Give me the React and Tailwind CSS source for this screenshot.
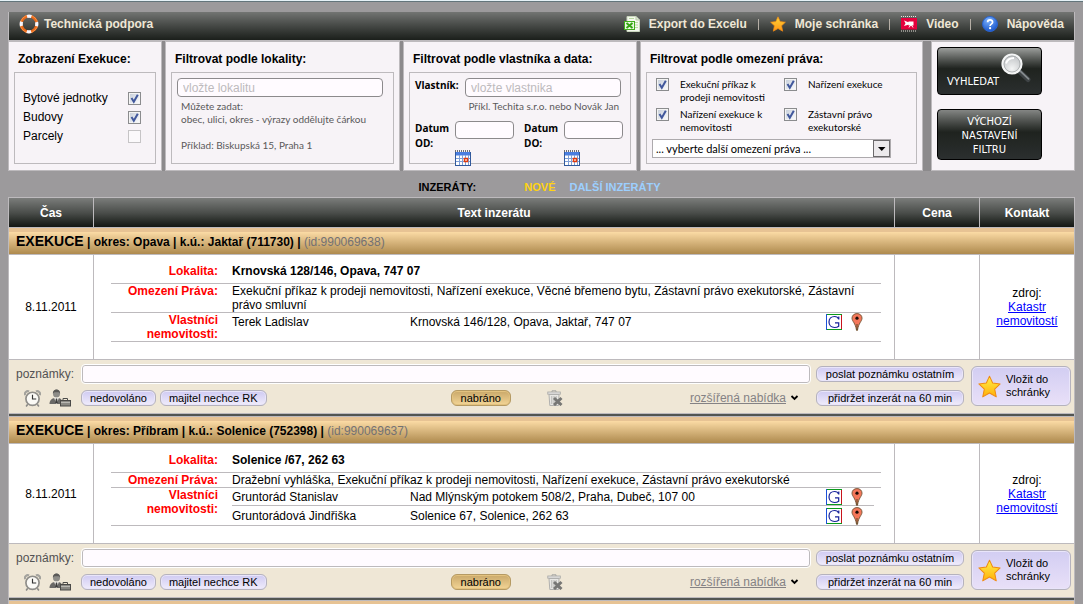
import React from "react";

const STAR_POINTS = "8,0.8 10.2,5.6 15.4,6.2 11.6,9.8 12.7,15.2 8,12.5 3.3,15.2 4.4,9.8 0.6,6.2 5.8,5.6";

function LifebuoyIcon() {
  return (
    <svg width="20" height="20" viewBox="0 0 20 20" aria-hidden="true">
      <circle cx="10" cy="10" r="7.8" fill="none" stroke="#e8681a" strokeWidth="2.800" />
      <circle cx="10" cy="10" r="8.6" fill="none" stroke="#ff9a4a" strokeWidth="0.8" />
      <circle
        cx="10"
        cy="10"
        r="7.8"
        fill="none"
        stroke="#f4f6ff"
        strokeWidth="3.2"
        strokeDasharray="4.4 7.85"
        strokeDashoffset="2.2"
      />
    </svg>
  );
}

function ExcelIcon() {
  return (
    <svg width="16" height="16" viewBox="0 0 16 16" aria-hidden="true">
      <path d="M3 0.5h9l3.5 3.5v11.5H3z" fill="#f4f8ee" stroke="#c9d6bd" />
      <path d="M12 0.5V4h3.5" fill="#dfe9d6" stroke="#b9c9aa" />
      <path d="M10 6.5h4M10 9h4M10 11.5h4M5 2.5h5" stroke="#b9dba0" />
      <rect x="0.5" y="5.5" width="10" height="8" fill="#e9f8e0" stroke="#3fae1c" />
      <path d="M2.500 7l6 5M8.500 7l-6 5" stroke="#35a512" strokeWidth="2" />
    </svg>
  );
}

function StarIcon({ size, light, dark }) {
  const id = `starFill${size}`;
  return (
    <svg width={size} height={size} viewBox="0 0 16 16" aria-hidden="true">
      <defs>
        <linearGradient id={id} x1="0" y1="0" x2="0" y2="1">
          <stop offset="0" stopColor={light} />
          <stop offset="1" stopColor={dark} />
        </linearGradient>
      </defs>
      <polygon points={STAR_POINTS} fill={`url(#${id})`} stroke="#f08a12" strokeWidth="0.7" strokeLinejoin="round" />
    </svg>
  );
}

function VideoIcon() {
  return (
    <svg width="16" height="16" viewBox="0 0 16 16" aria-hidden="true">
      <path d="M0 0.500h16M0 15h16" stroke="#e8e4dc" strokeDasharray="1 1" />
      <rect y="2" width="16" height="11.5" fill="#e4003c" />
      <path d="M7.500 5.500h5v4h-5zM3 4.500l5 2v2l-5 1.500 1.500-2.700z" fill="#fff" />
      <path d="M10 8.500l-2 3M10 8.500l2 3" fill="none" stroke="#fff" />
    </svg>
  );
}

function HelpIcon() {
  return (
    <svg width="16" height="16" viewBox="0 0 16 16" aria-hidden="true">
      <defs>
        <radialGradient id="helpFill" cx="0.4" cy="0.25" r="0.8">
          <stop offset="0" stopColor="#7db4ff" />
          <stop offset="1" stopColor="#1551c8" />
        </radialGradient>
      </defs>
      <circle cx="8" cy="8" r="7.500" fill="url(#helpFill)" stroke="#2a63cc" />
      <path d="M5.600 6.200c0-3.200 5-3.200 5 0 0 1.900-2.500 1.900-2.500 3.700" fill="none" stroke="#fff" strokeWidth="1.700" />
      <circle cx="8.100" cy="12.200" r="1.100" fill="#fff" />
    </svg>
  );
}

function CalendarIcon() {
  return (
    <svg width="16" height="16" viewBox="0 0 16 16" aria-hidden="true">
      <path d="M0 1h16" stroke="#444" strokeWidth="1.500" strokeDasharray="1 1" />
      <rect x="0.500" y="2.500" width="15" height="13" fill="#fff" stroke="#31599c" />
      <rect x="1" y="2" width="14" height="3.500" fill="#4a7ee0" />
      <path d="M1 8.500h14M1 11.500h14M4.500 5v10M7.500 5v10M10.500 5v10M13.500 5v10" stroke="#7f9ed6" />
      <rect x="9.500" y="8.500" width="3" height="3" fill="#fff" stroke="#e23a0c" strokeWidth="1.500" />
    </svg>
  );
}

function MagnifierIcon() {
  return (
    <svg width="32" height="32" viewBox="0 0 32 32" aria-hidden="true">
      <defs>
        <radialGradient id="lens" cx="0.5" cy="0.75" r="0.8">
          <stop offset="0" stopColor="#f4f5f5" />
          <stop offset="1" stopColor="#b9bcbf" />
        </radialGradient>
      </defs>
      <path d="M19.500 18.500l9.500 9" stroke="#3e4345" strokeWidth="5" strokeLinecap="round" />
      <path d="M20 17.800l9.500 9" stroke="#858b8e" strokeWidth="1.800" strokeLinecap="round" />
      <circle cx="13" cy="12" r="9.500" fill="url(#lens)" stroke="#f4f5f5" strokeWidth="2.200" />
      <circle cx="13" cy="12" r="8" fill="none" stroke="#a4a8aa" strokeWidth="0.800" />
      <path d="M7 11.500c1-3.500 4-5.500 8-5.500" fill="none" stroke="#fff" strokeWidth="2" />
    </svg>
  );
}

function GoogleIcon() {
  return (
    <svg width="16" height="16" viewBox="0 0 16 16" aria-hidden="true">
      <rect width="16" height="16" fill="#fff" />
      <path d="M0 0.500h16M0 15.500h16" stroke="#0a9a1c" />
      <path d="M0.500 0v16" stroke="#1c50d8" />
      <path d="M15.500 1v14" stroke="#c8141c" />
      <path d="M12.800 5.500V2.500M12.600 5c-.6-1.600-2.200-2.500-4-2.500C5.300 2.500 3 4.800 3 8s2.200 5.500 5.500 5.500c1.700 0 3.200-.5 4.200-1.300V8.800H9" fill="none" stroke="#16219a" strokeWidth="1.200" />
    </svg>
  );
}

function PinIcon() {
  return (
    <svg width="12" height="18" viewBox="0 0 12 18" aria-hidden="true">
      <path d="M6 0.600C3 0.600 1 2.600 1 5.200c0 3 3.600 5 4.500 12h1C7.400 10.200 11 8.200 11 5.200 11 2.600 9 0.600 6 0.600z" fill="#f5775a" stroke="#7a5a3c" />
      <path d="M6 11v6.500" stroke="#5b4a26" />
      <circle cx="6" cy="5.200" r="1.600" fill="#1c0a05" />
    </svg>
  );
}

function AlarmIcon() {
  return (
    <svg width="17" height="17" viewBox="0 0 16 16" aria-hidden="true">
      <path d="M1 4.800C.2 2.500 2.500.3 4.800 1.300M15 4.800c.8-2.300-1.500-4.500-3.800-3.500" fill="none" stroke="#a3a29d" strokeWidth="2" />
      <path d="M3.500 13.500L2 15.500M12.500 13.500l1.500 2" stroke="#8b8a87" strokeWidth="1.500" />
      <circle cx="8" cy="8.300" r="6.200" fill="#fbfaf6" stroke="#8f8e8a" strokeWidth="1.600" />
      <path d="M8 4.500v4h3.500" fill="none" stroke="#333" strokeWidth="1.100" />
    </svg>
  );
}

function AgentIcon() {
  return (
    <svg width="22" height="18" viewBox="0 0 22 18" aria-hidden="true">
      <path d="M4 5c-.5-6 7.500-6 7 0 0 5-7 5-7 0z" fill="#8d8c88" />
      <path d="M3.800 4.500c0-5.500 7.400-5.500 7.400 0L9.800 3.300H5.500z" fill="#5a5957" />
      <path d="M0.500 15c0-4 2.500-5.500 5-6h4c2.500.5 4 2 4 6z" fill="#6a6967" />
      <path d="M5 8.500h5L7.500 15z" fill="#f6f4ee" />
      <path d="M6.800 9.500h1.400l.6 4.500h-2.600z" fill="#3c3c3c" />
      <path d="M14 11.500V9.500h4.500v2" fill="none" stroke="#4c4c4a" />
      <rect x="11.500" y="11.500" width="10" height="5.500" fill="#8a8984" stroke="#4a4a48" />
      <path d="M12 13.500h9" stroke="#b9b8b3" />
    </svg>
  );
}

function TrashIcon() {
  return (
    <svg width="16" height="16" viewBox="0 0 16 16" aria-hidden="true">
      <path d="M5 2V0.800h4V2" fill="none" stroke="#a5a5a3" />
      <rect x="0.800" y="2" width="12.500" height="2.200" fill="#e4e3e1" stroke="#a5a5a3" strokeWidth="0.800" />
      <path d="M2 4.500h10l-.5 11H2.800z" fill="#e8e7e4" stroke="#b0b0ae" />
      <path d="M4.800 6v8M7 6v8M9.200 6v8" stroke="#b5b5b2" />
      <path d="M7 8l7.500 7M14.500 8L7 15" stroke="#777775" strokeWidth="3" />
    </svg>
  );
}

function Checkbox({ id, defaultChecked }) {
  return (
    <span className="grid size-[13px] shrink-0">
      <input
        id={id}
        type="checkbox"
        defaultChecked={defaultChecked}
        className="peer col-start-1 row-start-1 size-[13px] appearance-none border border-[#c6c4c6] bg-[#fbf9fb] checked:border-[#8b8c8e] checked:bg-linear-to-br checked:from-[#c4ccd8] checked:to-white checked:shadow-[inset_0_0_0_1px_#f4f4f4]"
      />
      <svg viewBox="0 0 13 13" className="pointer-events-none invisible col-start-1 row-start-1 size-[13px] peer-checked:visible" aria-hidden="true">
        <path d="M3.500 6l2.300 3.800L9.800 2.800" fill="none" stroke="#41589c" strokeWidth="2" />
      </svg>
    </span>
  );
}

function Panel({ title, children }) {
  return (
    <section className="flex flex-col border border-[#bdbabd] bg-[#f7f3f7] px-[5px] pb-1.5">
      <h2 className="px-1 pt-2.5 pb-1.5 text-xs leading-[14px] font-bold whitespace-nowrap">{title}</h2>
      <div className="flex-1 border border-[#bdbabd]">{children}</div>
    </section>
  );
}

const textInput = "min-w-0 rounded-[4px] border border-[#8c8a8c] bg-[#fffbff] px-[5px] text-xs placeholder:text-[#bdbabd]";
const helpText = "font-[Lato,sans-serif] text-[10px] leading-[13px]";

const shownTypes = [
  { id: "flats", label: "Bytové jednotky", on: true },
  { id: "buildings", label: "Budovy", on: true },
  { id: "parcels", label: "Parcely", on: false },
];

const restrictions = [
  { id: "r1", label: "Exekuční příkaz k prodeji nemovitosti" },
  { id: "r2", label: "Nařízení exekuce" },
  { id: "r3", label: "Nařízení exekuce k nemovitosti" },
  { id: "r4", label: "Zástavní právo exekutorské" },
];

function DateField({ id, label }) {
  return (
    <div className="grid grid-cols-[40px_1fr]">
      <label htmlFor={id} className="w-9 font-['Open_Sans',sans-serif] text-[10px] leading-[15px] font-bold">
        {label}
      </label>
      <div>
        <input id={id} type="text" className={`${textInput} block h-[18px] w-full`} />
        <button type="button" aria-label={`Kalendář ${label}`} className="mt-[11px] block">
          <CalendarIcon />
        </button>
      </div>
    </div>
  );
}

function Filters() {
  return (
    <form className="grid grid-cols-[154fr_235fr_234fr_283fr_149fr] gap-[3px] bg-[#8c8a8c]" onSubmit={(e) => e.preventDefault()}>
      <Panel title="Zobrazení Exekuce:">
        <div className="flex flex-col gap-[5px] pt-[18px] pr-3.5 pl-2">
          {shownTypes.map((t) => (
            <div key={t.id} className="flex items-center justify-between text-xs leading-[14px]">
              <label htmlFor={t.id}>{t.label}</label>
              <Checkbox id={t.id} defaultChecked={t.on} />
            </div>
          ))}
        </div>
      </Panel>

      <Panel title="Filtrovat podle lokality:">
        <div className="pt-[5px] pr-2.5 pl-[5px]">
          <input aria-label="Lokalita" placeholder="vložte lokalitu" className={`${textInput} block h-[19px] w-full`} />
          <p className={`${helpText} mt-[3px] pl-1 whitespace-nowrap text-[#5a595a]`}>
            Můžete zadat:
            <br />
            obec, ulici, okres - výrazy oddělujte čárkou
            <br />
            <br />
            Příklad: Biskupská 15, Praha 1
          </p>
        </div>
      </Panel>

      <Panel title="Filtrovat podle vlastníka a data:">
        <div className="h-[90px] pt-[5px] pr-[7px] pl-[5px]">
          <div className="grid grid-cols-[50px_1fr] pr-0.5">
            <label htmlFor="owner" className="font-['Open_Sans',sans-serif] text-[10px] leading-[15px] font-bold">
              Vlastník:
            </label>
            <input id="owner" type="text" placeholder="vložte vlastnika" className={`${textInput} h-[19px]`} />
          </div>
          <p className={`${helpText} mt-[3px] pr-1 text-right whitespace-nowrap text-[#5a595a]`}>
            Příkl. Techita s.r.o. nebo Novák Jan
          </p>
          <div className="mt-2 grid grid-cols-2 gap-x-2.5">
            <DateField id="from" label="Datum OD:" />
            <DateField id="to" label="Datum DO:" />
          </div>
        </div>
      </Panel>

      <Panel title="Filtrovat podle omezení práva:">
        <div className="pt-[5px] pl-[5px]">
          <div className="grid grid-cols-[128px_1fr] gap-y-1 pl-1">
            {restrictions.map((r) => (
              <div key={r.id} className="flex gap-[11px]">
                <Checkbox id={r.id} defaultChecked />
                <label htmlFor={r.id} className={`${helpText} max-w-[90px]`}>
                  {r.label}
                </label>
              </div>
            ))}
          </div>
          <div className="mt-[5px] mr-[25px] grid">
            <select
              aria-label="Další omezení práva"
              className="col-start-1 row-start-1 h-[19px] appearance-none border border-[#adaaad] bg-white px-[3px] font-[Lato,sans-serif] text-[11px] leading-[16px]"
            >
              <option>... vyberte další omezení práva ...</option>
            </select>
            <svg width="18" height="19" viewBox="0 0 18 19" className="pointer-events-none col-start-1 row-start-1 justify-self-end" aria-hidden="true">
              <rect x="0.500" y="1.500" width="16" height="16" fill="#ebe9eb" stroke="#6b696b" />
              <path d="M5 8h7.500L8.750 12z" fill="#000" />
            </svg>
          </div>
        </div>
      </Panel>

      <section className="ml-[5px] border border-[#bdbabd] bg-[#f7f3f7] px-[5px] pt-[5px] pb-[9px] font-['DejaVu_Sans',Verdana,sans-serif] text-[10px] leading-[14px] text-white">
        <button
          type="submit"
          className="flex h-[48px] w-[105px] items-end rounded-[4px] border border-black bg-linear-to-b from-[#9c9e9c] via-[#1f231f] via-45% to-[#2b2f2f] pb-[5px] pl-[9px]"
        >
          <span>VYHLEDAT</span>
          <span className="self-start pt-1">
            <MagnifierIcon />
          </span>
        </button>
        <button
          type="reset"
          className="mt-3.5 flex h-[51px] w-[105px] items-center justify-center rounded-[4px] border border-black bg-linear-to-b from-[#848684] via-[#1f231f] via-45% to-[#2b2f2f] px-3 pt-0.5 text-center"
        >
          VÝCHOZÍ NASTAVENÍ FILTRU
        </button>
      </section>
    </form>
  );
}

function TopBar() {
  const items = [
    { label: "Export do Excelu", icon: <ExcelIcon /> },
    { label: "Moje schránka", icon: <StarIcon size={16} light="#ffd83a" dark="#ff9414" /> },
    { label: "Video", icon: <VideoIcon /> },
    { label: "Nápověda", icon: <HelpIcon /> },
  ];
  return (
    <header className="flex h-[29px] items-center justify-between border-x border-b border-[#bdbabd] bg-linear-to-b from-[#737573] to-[#1b1f1b] px-2.5 pb-1 text-xs font-bold text-[#efe7d6]">
      <a href="#podpora" className="flex items-center gap-[5px]">
        <LifebuoyIcon />
        Technická podpora
      </a>
      <nav className="flex items-center">
        {items.map((it, i) => (
          <React.Fragment key={it.label}>
            {i > 0 && <span className="mx-[11px] h-[11px] w-px bg-[#b5aea5]" />}
            <a href="#menu" className="flex items-center gap-[9px]">
              {it.icon}
              {it.label}
            </a>
          </React.Fragment>
        ))}
      </nav>
    </header>
  );
}

const pill =
  "h-4 rounded-[6px] border border-[#b5b2bd] bg-linear-to-b from-[#cfcaf2] to-[#f0ecfb] pb-px text-[11px] leading-[12px] whitespace-nowrap shadow-[inset_0_0_0_1px_#e9e5fa]";
const goldPill =
  "h-4 rounded-[6px] border border-[#b59a63] bg-linear-to-b from-[#c9a86a] to-[#f3d596] px-[9px] pb-px text-[11px] leading-[12px] shadow-[inset_0_0_0_1px_#e3c27f]";

const listings = [
  {
    id: "990069638",
    place: "okres: Opava | k.ú.: Jaktař (711730)",
    date: "8.11.2011",
    locality: "Krnovská 128/146, Opava, 747 07",
    rights:
      "Exekuční příkaz k prodeji nemovitosti, Nařízení exekuce, Věcné břemeno bytu, Zástavní právo exekutorské, Zástavní právo smluvní",
    owners: [["Terek Ladislav", "Krnovská 146/128, Opava, Jaktař, 747 07"]],
  },
  {
    id: "990069637",
    place: "okres: Příbram | k.ú.: Solenice (752398)",
    date: "8.11.2011",
    locality: "Solenice /67, 262 63",
    rights: "Dražební vyhláška, Exekuční příkaz k prodeji nemovitosti, Nařízení exekuce, Zástavní právo exekutorské",
    owners: [
      ["Gruntorád Stanislav", "Nad Mlýnským potokem 508/2, Praha, Dubeč, 107 00"],
      ["Gruntorádová Jindřiška", "Solenice 67, Solenice, 262 63"],
    ],
  },
];

const cell = "border border-[#bdbabd] p-0";
const detailRow = "grid grid-cols-[107px_1fr] gap-x-3.5 border-b border-[#bdbabd]";
const detailLabel = "text-right font-bold text-[#ff0000]";

function NotesBar({ id }) {
  return (
    <div className="flex gap-[7px] bg-[#efe7d6] pt-[5px] pr-[3px] pb-1.5 pl-[7px]">
      <div className="flex flex-1 gap-1.5">
        <div className="flex-1">
          <div className="flex items-center">
            <label htmlFor={`note-${id}`} className="w-[66px] text-xs text-[#525152]">
              poznámky:
            </label>
            <input
              id={`note-${id}`}
              type="text"
              className="h-[18px] min-w-0 flex-1 rounded-[3px] border border-[#bdbabd] bg-[#fffbff] px-1 text-xs outline-1 outline-white"
            />
          </div>
          <div className="mt-1.5 flex h-[18px] items-center">
            <button type="button" aria-label="Připomenout" className="ml-2">
              <AlarmIcon />
            </button>
            <button type="button" aria-label="Makléř" className="ml-2">
              <AgentIcon />
            </button>
            <button type="button" className={`${pill} ml-2.5 px-2`}>
              nedovoláno
            </button>
            <button type="button" className={`${pill} ml-1 px-2`}>
              majitel nechce RK
            </button>
            <button type="button" className={`${goldPill} ml-[184px]`}>
              nabráno
            </button>
            <button type="button" aria-label="Smazat" className="ml-9">
              <TrashIcon />
            </button>
            <a href="#nabidka" className="ml-auto flex items-center gap-1 pr-[11px] text-xs leading-[14px] text-[#848284]">
              <span className="underline">rozšířená nabídka</span>
              <svg width="9" height="6" viewBox="0 0 9 6" aria-hidden="true">
                <path d="M1.500 1l3 3 3-3" fill="none" stroke="#000" strokeWidth="1.800" />
              </svg>
            </a>
          </div>
        </div>
        <div className="flex w-[148px] flex-col gap-2 pt-px">
          <button type="button" className={pill}>
            poslat poznámku ostatním
          </button>
          <button type="button" className={pill}>
            přidržet inzerát na 60 min
          </button>
        </div>
      </div>
      <button
        type="button"
        className="mt-px flex h-10 w-[100px] items-center gap-[5px] rounded-[6px] border border-[#b5b2bd] bg-linear-to-b from-[#d2cdf2] to-[#e9e0f8] pl-1.5 text-left text-[11px] leading-[13px] shadow-[inset_0_0_0_1px_#e9e5fa]"
      >
        <StarIcon size={23} light="#fff04a" dark="#ffb00a" />
        <span className="w-14">Vložit do schránky</span>
      </button>
    </div>
  );
}

function Listing({ item }) {
  return (
    <tbody>
      <tr>
        <td colSpan={4} className={cell}>
          <div className="border-t-4 border-[#e7c394] bg-linear-to-b from-[#fbdba5] to-[#ae8a4e] bg-clip-padding pb-0.5 pl-[7px] text-xs leading-[20px] font-bold">
            <span className="text-sm leading-[16px] font-black">EXEKUCE</span> | {item.place} |{" "}
            <span className="font-normal text-[#737173]">(id:{item.id})</span>
          </div>
        </td>
      </tr>
      <tr className="bg-white">
        <td className={`${cell} text-center`}>{item.date}</td>
        <td className={`${cell} align-top`}>
          <div className="pt-[9px] pr-[13px] pb-[17px] pl-[17px] leading-[14px]">
            <div className={`${detailRow} pb-[5px]`}>
              <span className={detailLabel}>Lokalita:</span>
              <span className="font-bold">{item.locality}</span>
            </div>
            <div className={detailRow}>
              <span className={detailLabel}>Omezení Práva:</span>
              <span>{item.rights}</span>
            </div>
            <div className={detailRow}>
              <span className={detailLabel}>Vlastníci nemovitosti:</span>
              <ul className="divide-y divide-[#bdbabd] pr-[7px]">
                {item.owners.map(([name, address]) => (
                  <li key={name} className="flex h-[18px] items-center [&+&]:h-[19px]">
                    <span className="w-[178px]">{name}</span>
                    <span className="flex-1">{address}</span>
                    <a href="#google" aria-label="Hledat na Googlu" className="mr-[9px]">
                      <GoogleIcon />
                    </a>
                    <a href="#mapa" aria-label="Zobrazit na mapě" className="mr-[11px]">
                      <PinIcon />
                    </a>
                  </li>
                ))}
              </ul>
            </div>
          </div>
        </td>
        <td className={cell} />
        <td className={`${cell} text-center leading-[14px]`}>
          zdroj:
          <br />
          <a href="#katastr" className="text-[#0000ff] underline">
            Katastr nemovitostí
          </a>
        </td>
      </tr>
      <tr>
        <td colSpan={4} className={cell}>
          <NotesBar id={item.id} />
        </td>
      </tr>
      <tr>
        <td colSpan={4} className={`${cell} h-[3px] bg-[#525552]`} />
      </tr>
    </tbody>
  );
}

export default function App() {
  return (
    <div className="h-screen overflow-y-auto border-t border-[#e6f2f7] bg-[#9c9a9c] font-['Liberation_Sans',Arial,sans-serif] text-xs text-black [scrollbar-width:none]">
      <div className="border-t border-[#63757b] px-2 pt-2.5">
        <TopBar />
        <Filters />
        <nav className="flex h-[26px] items-center justify-center pt-[7px] pr-1 text-[11px] font-bold">
          <span className="mr-12">INZERÁTY:</span>
          <a href="#nove" className="mr-3.5 text-[#ffd310]">
            NOVÉ
          </a>
          <a href="#dalsi" className="text-[#9ccfff]">
            DALŠÍ INZERÁTY
          </a>
        </nav>
        <table className="w-full table-fixed border-collapse">
          <colgroup>
            <col className="w-[85px]" />
            <col />
            <col className="w-[85px]" />
            <col className="w-[95px]" />
          </colgroup>
          <thead>
            <tr className="h-[30px] bg-linear-to-b from-[#7b7d7b] via-[#4a4d4a] to-[#101410] text-white">
              {["Čas", "Text inzerátu", "Cena", "Kontakt"].map((h) => (
                <th key={h} scope="col" className={`${cell} font-bold`}>
                  {h}
                </th>
              ))}
            </tr>
          </thead>
          {listings.map((item) => (
            <Listing key={item.id} item={item} />
          ))}
          <tbody>
            <tr>
              <td colSpan={4} className="h-1 border-x border-[#bdbabd] bg-[#e7c394] p-0" />
            </tr>
          </tbody>
        </table>
      </div>
    </div>
  );
}
